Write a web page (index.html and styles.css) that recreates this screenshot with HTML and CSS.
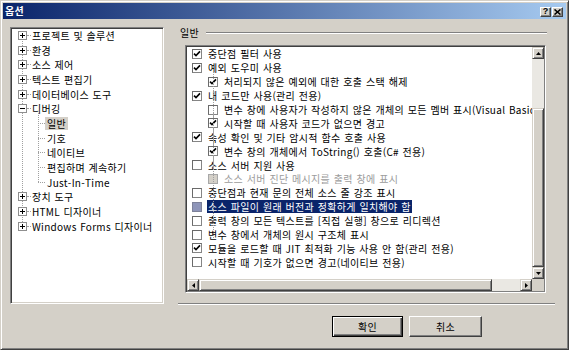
FILE: index.html
```html
<!DOCTYPE html>
<html lang="ko">
<head>
<meta charset="utf-8">
<title>옵션</title>
<link rel="stylesheet" href="styles.css">
</head>
<body>
<div class="window">
  <div class="titlebar">
    <span class="title">옵션</span>
    <div class="tb-buttons">
      <span class="tb-btn help">?</span>
      <span class="tb-btn close"><svg width="7" height="6" viewBox="0 0 7 6"><path d="M0.5 0.5l6 5M6.5 0.5l-6 5" stroke="#000" stroke-width="1.6" fill="none"/></svg></span>
    </div>
  </div>
  <div class="main">
    <div class="tree">
      <ul class="tree-list">
        <li><div class="trow"><span class="exp"><svg width="9" height="9"><rect x="0.5" y="0.5" width="8" height="8" fill="#fff" stroke="#8f8f8f"/><path d="M2 4.5h5M4.5 2v5" stroke="#000"/></svg></span><span class="conn"></span><span class="tlabel">프로젝트 및 솔루션</span></div></li>
        <li><div class="trow"><span class="exp"><svg width="9" height="9"><rect x="0.5" y="0.5" width="8" height="8" fill="#fff" stroke="#8f8f8f"/><path d="M2 4.5h5M4.5 2v5" stroke="#000"/></svg></span><span class="conn"></span><span class="tlabel">환경</span></div></li>
        <li><div class="trow"><span class="exp"><svg width="9" height="9"><rect x="0.5" y="0.5" width="8" height="8" fill="#fff" stroke="#8f8f8f"/><path d="M2 4.5h5M4.5 2v5" stroke="#000"/></svg></span><span class="conn"></span><span class="tlabel">소스 제어</span></div></li>
        <li><div class="trow"><span class="exp"><svg width="9" height="9"><rect x="0.5" y="0.5" width="8" height="8" fill="#fff" stroke="#8f8f8f"/><path d="M2 4.5h5M4.5 2v5" stroke="#000"/></svg></span><span class="conn"></span><span class="tlabel">텍스트 편집기</span></div></li>
        <li><div class="trow"><span class="exp"><svg width="9" height="9"><rect x="0.5" y="0.5" width="8" height="8" fill="#fff" stroke="#8f8f8f"/><path d="M2 4.5h5M4.5 2v5" stroke="#000"/></svg></span><span class="conn"></span><span class="tlabel">데이터베이스 도구</span></div></li>
        <li>
          <div class="trow"><span class="exp"><svg width="9" height="9"><rect x="0.5" y="0.5" width="8" height="8" fill="#fff" stroke="#8f8f8f"/><path d="M2 4.5h5" stroke="#000"/></svg></span><span class="conn"></span><span class="tlabel">디버깅</span></div>
          <ul class="sub">
            <li><div class="trow"><span class="conn"></span><span class="tlabel sel">일반</span></div></li>
            <li><div class="trow"><span class="conn"></span><span class="tlabel">기호</span></div></li>
            <li><div class="trow"><span class="conn"></span><span class="tlabel">네이티브</span></div></li>
            <li><div class="trow"><span class="conn"></span><span class="tlabel">편집하며 계속하기</span></div></li>
            <li><div class="trow"><span class="conn"></span><span class="tlabel">Just-In-Time</span></div></li>
          </ul>
        </li>
        <li><div class="trow"><span class="exp"><svg width="9" height="9"><rect x="0.5" y="0.5" width="8" height="8" fill="#fff" stroke="#8f8f8f"/><path d="M2 4.5h5M4.5 2v5" stroke="#000"/></svg></span><span class="conn"></span><span class="tlabel">장치 도구</span></div></li>
        <li><div class="trow"><span class="exp"><svg width="9" height="9"><rect x="0.5" y="0.5" width="8" height="8" fill="#fff" stroke="#8f8f8f"/><path d="M2 4.5h5M4.5 2v5" stroke="#000"/></svg></span><span class="conn"></span><span class="tlabel">HTML 디자이너</span></div></li>
        <li><div class="trow"><span class="exp"><svg width="9" height="9"><rect x="0.5" y="0.5" width="8" height="8" fill="#fff" stroke="#8f8f8f"/><path d="M2 4.5h5M4.5 2v5" stroke="#000"/></svg></span><span class="conn"></span><span class="tlabel">Windows Forms 디자이너</span></div></li>
      </ul>
    </div>
    <div class="pane">
      <div class="group-head"><span class="group-label">일반</span><span class="etch"></span></div>
      <div class="listbox">
        <div class="list-content">
          <div class="rows">
            <div class="row"><span class="cb"><svg width="8" height="8" viewBox="0 0 8 8"><path d="M1 3.6l2 2 4-4.2" fill="none" stroke="#000" stroke-width="1.6"/></svg></span><span class="lbl">중단점 필터 사용</span></div>
            <div class="row"><span class="cb"><svg width="8" height="8" viewBox="0 0 8 8"><path d="M1 3.6l2 2 4-4.2" fill="none" stroke="#000" stroke-width="1.6"/></svg></span><span class="lbl">예외 도우미 사용</span></div>
            <div class="row sub"><span class="cb"><svg width="8" height="8" viewBox="0 0 8 8"><path d="M1 3.6l2 2 4-4.2" fill="none" stroke="#000" stroke-width="1.6"/></svg></span><span class="lbl">처리되지 않은 예외에 대한 호출 스택 해제</span></div>
            <div class="row"><span class="cb"><svg width="8" height="8" viewBox="0 0 8 8"><path d="M1 3.6l2 2 4-4.2" fill="none" stroke="#000" stroke-width="1.6"/></svg></span><span class="lbl">내 코드만 사용(관리 전용)</span></div>
            <div class="row sub"><span class="cb"></span><span class="lbl">변수 창에 사용자가 작성하지 않은 개체의 모든 멤버 표시(Visual Basic</span></div>
            <div class="row sub"><span class="cb"><svg width="8" height="8" viewBox="0 0 8 8"><path d="M1 3.6l2 2 4-4.2" fill="none" stroke="#000" stroke-width="1.6"/></svg></span><span class="lbl">시작할 때 사용자 코드가 없으면 경고</span></div>
            <div class="row"><span class="cb"><svg width="8" height="8" viewBox="0 0 8 8"><path d="M1 3.6l2 2 4-4.2" fill="none" stroke="#000" stroke-width="1.6"/></svg></span><span class="lbl">속성 확인 및 기타 암시적 함수 호출 사용</span></div>
            <div class="row sub"><span class="cb"><svg width="8" height="8" viewBox="0 0 8 8"><path d="M1 3.6l2 2 4-4.2" fill="none" stroke="#000" stroke-width="1.6"/></svg></span><span class="lbl">변수 창의 개체에서 ToString() 호출(C# 전용)</span></div>
            <div class="row"><span class="cb"></span><span class="lbl">소스 서버 지원 사용</span></div>
            <div class="row sub disabled"><span class="cb"></span><span class="lbl">소스 서버 진단 메시지를 출력 창에 표시</span></div>
            <div class="row"><span class="cb"></span><span class="lbl">중단점과 현재 문의 전체 소스 줄 강조 표시</span></div>
            <div class="row selected"><span class="cb"></span><span class="lbl">소스 파일이 원래 버전과 정확하게 일치해야 함</span></div>
            <div class="row"><span class="cb"></span><span class="lbl">출력 창의 모든 텍스트를 [직접 실행] 창으로 리디렉션</span></div>
            <div class="row"><span class="cb"></span><span class="lbl">변수 창에서 개체의 원시 구조체 표시</span></div>
            <div class="row"><span class="cb"><svg width="8" height="8" viewBox="0 0 8 8"><path d="M1 3.6l2 2 4-4.2" fill="none" stroke="#000" stroke-width="1.6"/></svg></span><span class="lbl">모듈을 로드할 때 JIT 최적화 기능 사용 안 함(관리 전용)</span></div>
            <div class="row"><span class="cb"></span><span class="lbl">시작할 때 기호가 없으면 경고(네이티브 전용)</span></div>
          </div>
        </div>
        <div class="vscroll">
          <span class="sb-btn"><svg width="5" height="3"><path d="M2.5 0L5 3H0z" fill="#000"/></svg></span>
          <span class="track vtrack"></span>
          <span class="thumb vthumb"></span>
          <span class="sb-btn"><svg width="5" height="3"><path d="M0 0h5L2.5 3z" fill="#000"/></svg></span>
        </div>
        <div class="hscroll">
          <span class="sb-btn"><svg width="3" height="5"><path d="M0 2.5L3 0v5z" fill="#000"/></svg></span>
          <span class="thumb hthumb"></span>
          <span class="track htrack"></span>
          <span class="sb-btn"><svg width="3" height="5"><path d="M0 0l3 2.5L0 5z" fill="#000"/></svg></span>
        </div>
        <div class="corner"></div>
      </div>
      <div class="separator"></div>
      <div class="buttons">
        <button class="btn default ok">확인</button>
        <button class="btn cancel">취소</button>
      </div>
    </div>
  </div>
</div>
</body>
</html>
```

FILE: styles.css
```css
html, body {
  margin: 0;
  padding: 0;
  background: #ffffff;
}

body {
  font-family: "Noto Sans CJK KR", "Noto Sans", sans-serif;
  font-size: 10px;
  color: #000;
}

.window {
  width: 569px;
  height: 350px;
  box-sizing: border-box;
  background: #d4d0c8;
  border: 1px solid;
  border-color: #d4d0c8 #404040 #404040 #d4d0c8;
  box-shadow: inset 1px 1px #ffffff, inset -1px -1px #808080;
  padding: 2px;
  display: flex;
  flex-direction: column;
}

.titlebar {
  height: 16px;
  flex: none;
  display: flex;
  align-items: center;
  padding: 0 3px 0 2px;
  background: linear-gradient(to right, #0a246a, #a6caf0);
}

.title {
  color: #fff;
  font-weight: bold;
  font-size: 10px;
  line-height: 16px;
  letter-spacing: 0.3px;
}

.tb-buttons {
  margin-left: auto;
  display: flex;
  gap: 1px;
  margin-top: 1px;
}

.tb-btn {
  width: 11px;
  height: 10px;
  box-sizing: border-box;
  background: #d4d0c8;
  border: 1px solid;
  border-color: #ffffff #404040 #404040 #ffffff;
  box-shadow: inset -1px -1px #808080;
  display: flex;
  align-items: center;
  justify-content: center;
  font-family: "Liberation Sans", sans-serif;
  font-weight: bold;
  font-size: 9px;
  line-height: 1;
}

.main {
  display: flex;
  gap: 14px;
  padding: 8px 0 0 7px;
}

/* tree */
.tree {
  width: 154px;
  height: 277px;
  flex: none;
  box-sizing: border-box;
  background: #fff;
  border: 1px solid;
  border-color: #808080 #ffffff #ffffff #808080;
  box-shadow: inset 1px 1px #404040, inset -1px -1px #d4d0c8;
  padding: 1px;
  overflow: hidden;
}

.tree-list {
  list-style: none;
  margin: -1px 0 0;
  padding: 0;
  position: relative;
}

.tree-list::before {
  content: "";
  position: absolute;
  left: 10px;
  top: 7px;
  height: 191px;
  border-left: 1px dotted #a0a0a0;
}

.tree-list li {
  margin: 0;
  padding: 0;
}

.trow {
  height: 14.7px;
  display: flex;
  align-items: center;
  padding-left: 6px;
  white-space: nowrap;
}

.exp {
  width: 9px;
  height: 9px;
  flex: none;
  display: block;
  position: relative;
  z-index: 1;
}

.exp svg {
  display: block;
}

.conn {
  width: 4px;
  flex: none;
  height: 0;
  border-top: 1px dotted #a0a0a0;
}

.tlabel {
  padding: 0 1px;
  line-height: 13px;
  letter-spacing: 0.3px;
  word-spacing: 0.4px;
}

.sub {
  list-style: none;
  margin: 0;
  padding: 0;
  position: relative;
}

.sub::before {
  content: "";
  position: absolute;
  left: 26px;
  top: -3px;
  height: 69px;
  border-left: 1px dotted #a0a0a0;
}

.sub .trow {
  padding-left: 26px;
}

.sub .conn {
  width: 7px;
}

.sub .tlabel {
  padding: 0 2px;
}

.tlabel.sel {
  background: #d4d0c8;
}

/* right pane */
.pane {
  width: 377px;
  flex: none;
  display: flex;
  flex-direction: column;
}

.group-head {
  height: 12px;
  display: flex;
  align-items: center;
  padding-left: 2px;
  margin-right: 8px;
}

.group-label {
  line-height: 12px;
  margin-right: 7px;
  letter-spacing: 0.3px;
}

.etch {
  flex: 1;
  height: 0;
  border-top: 1px solid #808080;
  border-bottom: 1px solid #ffffff;
}

.listbox {
  margin: 6px 9px 0 7px;
  height: 248px;
  box-sizing: border-box;
  background: #fff;
  border: 1px solid;
  border-color: #808080 #ffffff #ffffff #808080;
  box-shadow: inset 1px 1px #404040, inset -1px -1px #808080;
  padding: 1px;
  display: grid;
  grid-template-columns: 345px 12px;
  grid-template-rows: 232px 12px;
}

.list-content {
  overflow: hidden;
  background: #fff;
}

.row {
  height: 13.9px;
  display: flex;
  align-items: center;
  padding-left: 5px;
  white-space: nowrap;
}

.row.sub {
  padding-left: 21px;
}

.cb {
  width: 10px;
  height: 10px;
  flex: none;
  box-sizing: border-box;
  border: 1px solid #858585;
  border-top-color: #6a6a6a;
  border-left-color: #6a6a6a;
  background: #fff;
  margin-right: 5px;
  display: block;
}

.cb svg {
  display: block;
}

.lbl {
  padding: 0 1px;
  line-height: 13px;
  letter-spacing: 0.3px;
  word-spacing: 0.6px;
}

.row.disabled .cb {
  background: #d4d0c8;
  border-color: #a8a8a8;
}

.row.disabled .lbl {
  color: #9c9c9c;
}

.row.selected .cb {
  background: #8e95b9;
  border-color: #7d8199;
}

.row.selected .lbl {
  background: #0a246a;
  color: #fff;
}

/* scrollbars */
.vscroll {
  display: flex;
  flex-direction: column;
}

.hscroll {
  display: flex;
}

.sb-btn {
  width: 12px;
  height: 12px;
  flex: none;
  box-sizing: border-box;
  background: #d4d0c8;
  border: 1px solid;
  border-color: #d4d0c8 #404040 #404040 #d4d0c8;
  box-shadow: inset 1px 1px #ffffff, inset -1px -1px #808080;
  display: flex;
  align-items: center;
  justify-content: center;
}

.sb-btn svg {
  display: block;
}

.track {
  background: #eae8e3;
  flex: none;
}

.thumb {
  flex: none;
  box-sizing: border-box;
  background: #d4d0c8;
  border: 1px solid;
  border-color: #d4d0c8 #404040 #404040 #d4d0c8;
  box-shadow: inset 1px 1px #ffffff, inset -1px -1px #808080;
}

.vtrack {
  height: 49px;
}

.vthumb {
  height: 159px;
}

.hthumb {
  width: 293px;
}

.htrack {
  width: 28px;
}

.corner {
  background: #d4d0c8;
}

.separator {
  margin-top: 10px;
  height: 0;
  border-top: 1px solid #808080;
  border-bottom: 1px solid #ffffff;
}

.buttons {
  margin-top: 11px;
  display: flex;
  gap: 6px;
  padding-left: 154px;
}

.btn {
  height: 21px;
  box-sizing: border-box;
  padding: 0;
  margin: 0;
  font-family: "Noto Sans CJK KR", "Noto Sans", sans-serif;
  font-size: 10px;
  letter-spacing: 0.3px;
  color: #000;
  background: #d4d0c8;
  border: 1px solid;
  border-color: #ffffff #404040 #404040 #ffffff;
  box-shadow: inset -1px -1px #808080;
}

.btn.ok {
  width: 71px;
}

.btn.cancel {
  width: 73px;
}

.btn.default {
  border: 1px solid #000;
  box-shadow: inset 1px 1px #ffffff, inset -1px -1px #404040, inset -2px -2px #808080;
}
```
